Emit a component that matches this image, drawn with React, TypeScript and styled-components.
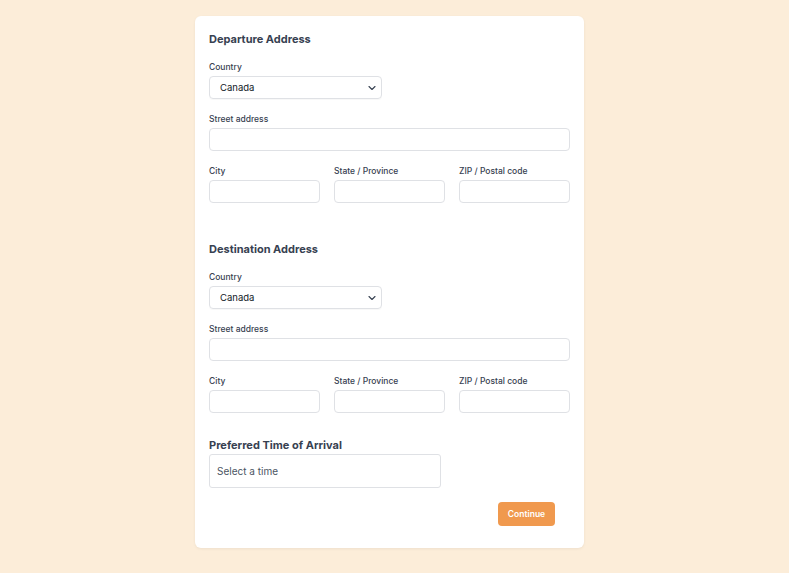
import { createGlobalStyle } from 'styled-components';
import styled from 'styled-components';

const GlobalStyle = createGlobalStyle`
  html, body {
    margin: 0;
    padding: 0;
    background: #fcedd9;
    font-family: Inter, "Liberation Sans", sans-serif;
  }
`;

const Page = styled.div`
  min-height: 573px;
  padding: 16px 10px 25px 0;
  box-sizing: border-box;
`;

const Card = styled.form`
  width: 389px;
  margin: 0 auto;
  box-sizing: border-box;
  background: #ffffff;
  border-radius: 6px;
  padding: 16px 14px 22px;
  box-shadow: 0 1px 3px rgb(0 0 0 / 0.06);
  display: flex;
  flex-direction: column;
`;

const Section = styled.section<{ $gapBelow?: number }>`
  display: flex;
  flex-direction: column;
  gap: 14px;
  margin-bottom: ${p => p.$gapBelow ?? 0}px;
`;

const Heading = styled.h2`
  margin: 0;
  font-size: 11px;
  line-height: 15px;
  font-weight: 700;
  color: #374151;
`;

const Field = styled.div<{ $gap?: number }>`
  display: flex;
  flex-direction: column;
  gap: ${p => p.$gap ?? 3}px;
`;

const Label = styled.label`
  font-size: 8.5px;
  line-height: 12px;
  font-weight: 500;
  color: #374151;
`;

const Row = styled.div`
  display: grid;
  grid-template-columns: repeat(3, 1fr);
  gap: 14px;
`;

const Input = styled.input`
  height: 23px;
  box-sizing: border-box;
  border: 1px solid #dfe1e5;
  border-radius: 4px;
  background: #fff;
  font: inherit;
  font-size: 9px;
  padding: 0 9px;
  outline: none;
  width: 100%;
`;

const SelectBox = styled.div`
  width: 173px;
  height: 23px;
  box-sizing: border-box;
  border: 1px solid #dfe1e5;
  border-radius: 4px;
  display: flex;
  align-items: center;
  justify-content: space-between;
  padding: 0 3px 0 10px;
  font-size: 9.5px;
  color: #111827;
  box-shadow: 0 1px 1px rgb(0 0 0 / 0.03);
`;

const TimeBox = styled.div`
  width: 232px;
  height: 34px;
  box-sizing: border-box;
  border: 1px solid #dfe1e5;
  border-radius: 3px;
  display: flex;
  align-items: center;
  padding: 0 7px;
  font-size: 10px;
  color: #4b5563;
`;

const Footer = styled.div`
  display: flex;
  justify-content: flex-end;
  padding-right: 15px;
  margin-top: 14px;
`;

const Button = styled.button`
  width: 57px;
  height: 24px;
  border: none;
  border-radius: 4px;
  background: #f0994e;
  color: #fff;
  font: inherit;
  font-size: 8.5px;
  font-weight: 600;
  cursor: pointer;
`;

const Chevron = () => (
  <svg width="12" height="12" viewBox="0 0 24 24" fill="none" stroke="#374151" strokeWidth="2.2" strokeLinecap="round" strokeLinejoin="round">
    <path d="m6 9 6 6 6-6" />
  </svg>
);

const AddressSection = ({ title, gapBelow }: { title: string; gapBelow: number }) => (
  <Section $gapBelow={gapBelow}>
    <Heading>{title}</Heading>
    <Field>
      <Label>Country</Label>
      <SelectBox>
        <span>Canada</span>
        <Chevron />
      </SelectBox>
    </Field>
    <Field>
      <Label>Street address</Label>
      <Input />
    </Field>
    <Row>
      <Field>
        <Label>City</Label>
        <Input />
      </Field>
      <Field>
        <Label>State / Province</Label>
        <Input />
      </Field>
      <Field>
        <Label>ZIP / Postal code</Label>
        <Input />
      </Field>
    </Row>
  </Section>
);

export default function App() {
  return (
    <>
      <GlobalStyle />
      <Page>
        <Card onSubmit={e => e.preventDefault()}>
          <AddressSection title="Departure Address" gapBelow={39} />
          <AddressSection title="Destination Address" gapBelow={25} />
          <Field $gap={1}>
            <Heading>Preferred Time of Arrival</Heading>
            <TimeBox>Select a time</TimeBox>
          </Field>
          <Footer>
            <Button type="submit">Continue</Button>
          </Footer>
        </Card>
      </Page>
    </>
  );
}
